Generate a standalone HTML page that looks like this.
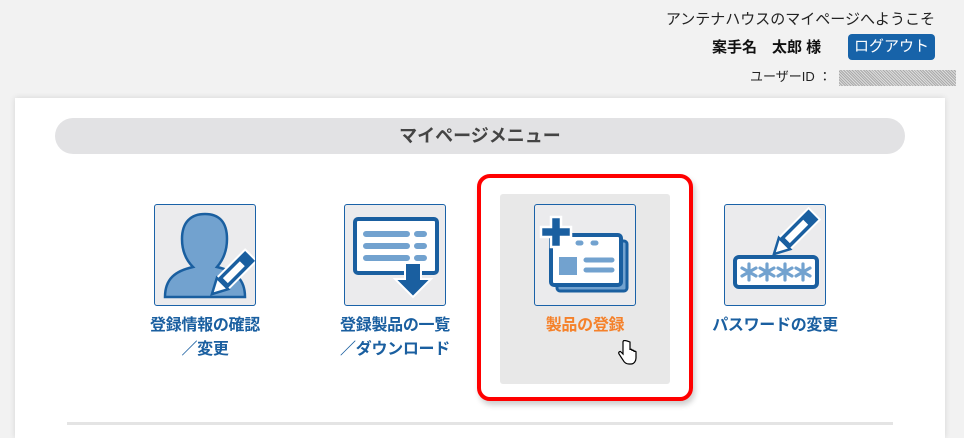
<!DOCTYPE html>
<html><head><meta charset="utf-8"><style>
*{margin:0;padding:0;box-sizing:border-box}
body{width:964px;height:425px;overflow:hidden;background:#f2f2f2;font-family:"Liberation Sans","Noto Sans CJK JP",sans-serif;position:relative}
.a{position:absolute}
.panel{left:15px;top:98px;width:930px;height:340px;background:#fff;box-shadow:0 0 6px rgba(0,0,0,.12)}
.bar{left:55px;top:118px;width:850px;height:36px;background:#e2e2e4;border-radius:18px;text-align:center;line-height:36px;font-size:18px;font-weight:bold;color:#444}
.ic{width:102px;height:102px;background:#ebebed;border:1px solid #1a62a8;border-radius:3px}
.lb{font-size:16px;font-weight:bold;color:#1a5fa0;text-align:center;line-height:24px;width:170px;letter-spacing:-0.3px}
</style></head><body>
<div class="a" style="right:29px;top:8px;font-size:15px;color:#222">アンテナハウスのマイページへようこそ</div>
<div class="a" style="left:712px;top:36px;font-size:15px;font-weight:bold;color:#111">案手名　太郎 様</div>
<div class="a" style="left:848px;top:34px;width:87px;height:26px;background:#1763a9;border-radius:4px;color:#fff;font-size:15px;text-align:center;line-height:26px">ログアウト</div>
<div class="a" style="left:750px;top:66px;font-size:13px;color:#222">ユーザーID ：</div>
<div class="a" style="left:839px;top:70px;width:117px;height:16px;background:repeating-linear-gradient(45deg,#aaa 0 1px,#ddd 1px 2px),#ccc"></div>
<div class="a panel"></div>
<div class="a bar">マイページメニュー</div>
<div class="a" style="left:477px;top:174px;width:216px;height:227px;border:4px solid #f00;border-radius:13px;box-shadow:2px 4px 6px rgba(0,0,0,.2)"></div>
<div class="a" style="left:500px;top:194px;width:170px;height:190px;background:#e8e8e8;border-radius:3px"></div>
<div class="a" style="left:67px;top:422px;width:826px;height:3px;background:#e4e4e4"></div>

<div class="a ic" style="left:154px;top:204px"><svg width="100" height="100" viewBox="0 0 100 100">
<path d="M10 92 C10 74 20 66 38 62 C31 55 27 46 27 34 C27 17 36 9 50 9 C64 9 72 17 72 34 C72 46 68 55 62 62 C80 66 90 74 90 92Z" fill="#72a2cf" stroke="#1a5fa0" stroke-width="2.5"/>
<g transform="translate(76 70) rotate(45)"><rect x="-8" y="-28" width="16" height="40" fill="#1a5fa0" stroke="#fff" stroke-width="2"/><rect x="-3.5" y="-16" width="7" height="24" fill="#fff"/><path d="M-8 12 L8 12 L0 27Z" fill="#fff" stroke="#1a5fa0" stroke-width="2.5"/></g></svg></div>
<div class="a ic" style="left:344px;top:204px"><svg width="100" height="100" viewBox="0 0 100 100">
<rect x="10" y="14" width="82" height="54" rx="3" fill="#fff" stroke="#1a5fa0" stroke-width="4"/>
<g stroke="#72a2cf" stroke-width="6" stroke-linecap="round"><path d="M21 29H62M72 29H79M21 41H62M72 41H79M21 53H62M72 53H79"/></g>
<path d="M60 58H76V74H86L68 92L50 74H60Z" fill="#1a5fa0" stroke="#fff" stroke-width="2"/></svg></div>
<div class="a ic" style="left:534px;top:204px"><svg width="100" height="100" viewBox="0 0 100 100">
<rect x="22" y="36" width="70" height="50" rx="3" fill="#72a2cf" stroke="#1a5fa0" stroke-width="3"/>
<rect x="16" y="30" width="70" height="50" rx="3" fill="#fff" stroke="#1a5fa0" stroke-width="4"/>
<rect x="24" y="52" width="18" height="18" fill="#72a2cf"/>
<g stroke="#72a2cf" stroke-width="5" stroke-linecap="round"><path d="M51 55H77M51 65H77M43 38H46M58 38H61"/></g>
<path d="M16 12H26V22H36V32H26V42H16V32H6V22H16Z" fill="#1a5fa0" stroke="#fff" stroke-width="2.5"/></svg></div>
<div class="a ic" style="left:724px;top:204px"><svg width="100" height="100" viewBox="0 0 100 100">
<rect x="10" y="52" width="82" height="30" rx="4" fill="#fff" stroke="#1a5fa0" stroke-width="4"/>
<g stroke="#72a2cf" stroke-width="3.2" stroke-linecap="round">
<g transform="translate(24 67)"><path d="M0-8V8M-7-4L7 4M-7 4L7-4"/></g>
<g transform="translate(42 67)"><path d="M0-8V8M-7-4L7 4M-7 4L7-4"/></g>
<g transform="translate(60 67)"><path d="M0-8V8M-7-4L7 4M-7 4L7-4"/></g>
<g transform="translate(78 67)"><path d="M0-8V8M-7-4L7 4M-7 4L7-4"/></g></g>
<g transform="translate(68 30) rotate(45)"><rect x="-8" y="-30" width="16" height="42" fill="#1a5fa0" stroke="#fff" stroke-width="2"/><rect x="-3.5" y="-18" width="7" height="26" fill="#fff"/><path d="M-8 12 L8 12 L0 27Z" fill="#fff" stroke="#1a5fa0" stroke-width="2.5"/></g></svg></div>

<div class="a lb" style="left:120px;top:314px">登録情報の確認<br>／変更</div>
<div class="a lb" style="left:310px;top:314px">登録製品の一覧<br>／ダウンロード</div>
<div class="a lb" style="left:500px;top:314px;color:#f5812a">製品の登録</div>
<div class="a lb" style="left:690px;top:314px">パスワードの変更</div>
<svg class="a" style="left:617px;top:340px" width="20" height="26" viewBox="0 0 20 26"><path d="M6 2v12l-2-2c-1-1-3 0-2 2l4 6c1 2 3 4 6 4h2c3 0 5-3 5-6v-6c0-1-2-1-2 0v-1c0-1-2-1-2 0v-1c0-1-2-1-2 0V2C8 0 6 0 6 2z" fill="#fff" stroke="#000" stroke-width="1.2"/></svg>
</body></html>
